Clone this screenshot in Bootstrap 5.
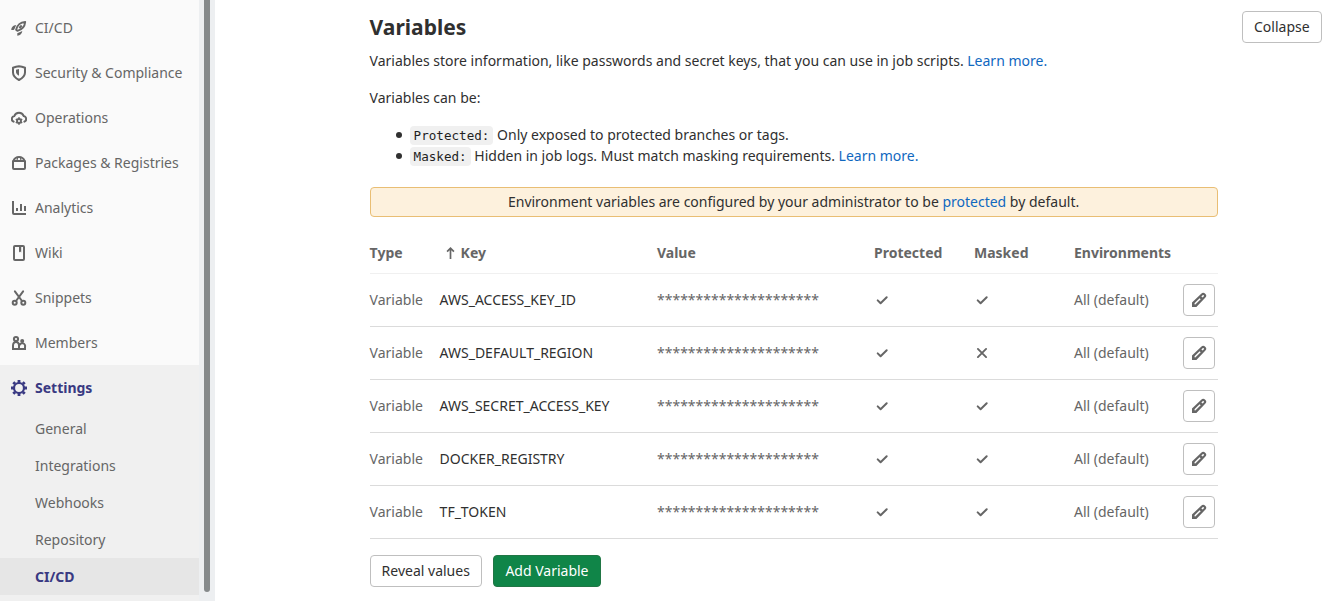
<!DOCTYPE html>
<html lang="en">
<head>
<meta charset="utf-8">
<meta name="viewport" content="width=device-width, initial-scale=1">
<title>CI/CD Settings</title>
<link rel="stylesheet" href="https://cdn.jsdelivr.net/npm/bootstrap@5.3.0/dist/css/bootstrap.min.css">
<style>
body{font:14px/20px "Noto Sans",sans-serif;color:#303030;height:601px;overflow:hidden}
a{color:#1068bf;text-decoration:none}
svg{display:block;flex:none}
.side{width:215px;background:#edeff1}
.side-menu{width:199px;background:#fafafa;padding-top:5px}
.side-link{height:45px;padding:1px 0 0 11px;gap:8px;color:#666}
.side-open{background:#f0f0f0}
.side-open .side-link,.sub-link.current{color:#393982;font-weight:700}
.sub-link{height:37px;padding:1px 0 0 35px;color:#666}
.sub-link.current{background:#e6e6e6}
.thumb{width:6px;height:592px;margin-left:5px;background:#868a8b;border-radius:0 0 3px 3px}
.main-pane{padding:11px 14.4px 0 154.6px}
.settings-body{width:848px}
h4{font-size:21px;line-height:28px;font-weight:700;margin:2px 0 10px}
.can-be{margin-top:17px}
.btn{--bs-btn-font-size:14px;--bs-btn-line-height:16px;--bs-btn-padding-x:11px;--bs-btn-padding-y:7px;--bs-btn-border-radius:4px}
.btn-plain{--bs-btn-color:#303030;--bs-btn-border-color:#bfbfbf;--bs-btn-bg:#fff}
.btn-confirm{--bs-btn-color:#fff;--bs-btn-bg:#108548;--bs-btn-border-color:#217645;--bs-btn-padding-x:11.5px}
.btn-edit{width:32px;height:32px;padding:7px;color:#666}
.actions{gap:11px}
code{font:12.6px/17px "DejaVu Sans Mono",monospace;color:#1f1f1f;background:#f0f0f0;border-radius:4px;padding:2px 4px}
.kinds{line-height:21px;padding-left:40px;margin:16px 0 0;list-style:none}
.kinds li::before{content:"";display:inline-block;width:6px;height:6px;border-radius:50%;background:#303030;margin:0 7.500px 0 -13.500px;vertical-align:2.5px}
.notice{height:30px;margin-top:21px;border:1px solid #e9be74;border-radius:4px;background:#fdf1dd}
.vars{table-layout:fixed;margin:16px 0 0;--bs-table-color:#666}
.vars>:not(caption)>*>*{padding:0;height:53px;border-bottom:1px solid #dbdbdb;vertical-align:middle;color:#666}
.vars>:not(caption)>*>:nth-child(n+3){padding-left:.4px}
.vars>thead>tr>th{height:40px;padding-top:1px;font-weight:700;border-bottom-color:#f0f0f0}
.vars>tbody>tr>td.key{color:#303030}
</style>
</head>
<body class="d-flex">
<svg width="0" height="0" class="position-absolute">
  <symbol id="check" viewBox="0 0 16 16"><path d="M3.700 8.400l2.900 2.800 6.100-6" fill="none" stroke="currentColor" stroke-width="2" stroke-linecap="round" stroke-linejoin="round"/></symbol>
  <symbol id="cross" viewBox="0 0 16 16"><path d="M3.900 3.900l8.200 8.200M12.100 3.900l-8.200 8.200" fill="none" stroke="currentColor" stroke-width="1.900" stroke-linecap="round"/></symbol>
  <symbol id="pencil" viewBox="0 0 16 16"><path fill="currentColor" fill-rule="evenodd" d="M1 15v-4.500L10.200 1.800a2.700 2.700 0 0 1 4 0 2.700 2.700 0 0 1 0 4L5.400 15zM3.700 12.500h.6L9.700 7.300 8.600 6.200 3.500 11.200zM10.400 4.600l1 1 1.300-1.200a.75.75 0 0 0-1.100-1.100z"/></symbol>
</svg>
<aside class="side d-flex flex-shrink-0">
  <nav class="side-menu">
    <a class="side-link d-flex align-items-center"><svg width="16" height="16" viewBox="0 0 16 16"><path d="M14.200 1.900C9.800 2.300 6.200 5.300 5.100 9.700l1.300 1.200C10.700 9.800 13.800 6.200 14.200 1.900zM8.300 8l2.400-2.500" fill="none" stroke="currentColor" stroke-width="1.900" stroke-linejoin="round"/><path d="M5.200 4.900L3.400 9.200 2.600 10H.3C.2 7.500 2 5 5.200 4.900zM11.300 10.900c-.2 2.600-2 4.600-5 4.900v-2.600z" fill="currentColor"/></svg>CI/CD</a>
    <a class="side-link d-flex align-items-center"><svg width="16" height="16" viewBox="0 0 16 16"><path d="M8 1.200c2.300.3 4.200.9 6 1.600V7.500c0 3.200-2.500 5.700-6 7.500-3.500-1.800-6-4.300-6-7.500V2.800C3.800 2.100 5.700 1.500 8 1.200z" fill="none" stroke="currentColor" stroke-width="2" stroke-linejoin="round"/><path d="M8 4v6.800C6.200 9.700 5 8.500 5 7V4.800z" fill="currentColor"/></svg>Security &amp; Compliance</a>
    <a class="side-link d-flex align-items-center"><svg width="16" height="16" viewBox="0 0 16 16"><path d="M2.600 11.700A3 3 0 0 1 3.300 6 5 5 0 0 1 12.700 6a3 3 0 0 1 .7 5.700" fill="none" stroke="currentColor" stroke-width="2" stroke-linecap="round"/><circle cx="8" cy="11" r="2" fill="none" stroke="currentColor" stroke-width="1.900"/><path d="M8 7.200v1.600M8 13.200v1.600M4.800 9.100l1.300.8M9.900 12.100l1.300.8M4.800 12.900l1.300-.8M9.900 9.900l1.300-.8" stroke="currentColor" stroke-width="1.600"/></svg>Operations</a>
    <a class="side-link d-flex align-items-center"><svg width="16" height="16" viewBox="0 0 16 16"><path d="M2 6h12v7a1 1 0 0 1-1 1H3a1 1 0 0 1-1-1zM2.400 5.800C3.400 3.300 5.200 1.900 8 1.900s4.600 1.400 5.600 3.900" fill="none" stroke="currentColor" stroke-width="2" stroke-linejoin="round"/><path d="M6.700 2L6 5.500M9.300 2l.7 3.500" stroke="currentColor" stroke-width="1.200"/></svg>Packages &amp; Registries</a>
    <a class="side-link d-flex align-items-center"><svg width="16" height="16" viewBox="0 0 16 16"><path d="M2 1v12a1 1 0 0 0 1 1h12M6 8v3M10 4v7M14 6v5" fill="none" stroke="currentColor" stroke-width="2"/></svg>Analytics</a>
    <a class="side-link d-flex align-items-center"><svg width="16" height="16" viewBox="0 0 16 16"><rect x="3" y="1" width="10" height="14" rx="1" fill="none" stroke="currentColor" stroke-width="2"/><path d="M8 1h2.200v6.500L9.100 6.600 8 7.500z" fill="currentColor"/></svg>Wiki</a>
    <a class="side-link d-flex align-items-center"><svg width="16" height="16" viewBox="0 0 16 16" fill="none" stroke="currentColor" stroke-width="2"><circle cx="3.700" cy="12.700" r="2"/><circle cx="12.300" cy="12.700" r="2"/><path d="M3.900 1.400L11 11M12.100 1.400L5 11" stroke-linecap="round"/></svg>Snippets</a>
    <a class="side-link d-flex align-items-center"><svg width="16" height="16" viewBox="0 0 16 16" fill="none" stroke="currentColor" stroke-width="2"><circle cx="5" cy="4" r="2.100"/><circle cx="11.200" cy="6" r="1"/><path d="M2 14v-3.200C2 8.500 3.300 7 5 7s3 1.500 3 3.800V14zM8 14h6v-2a2.500 2.500 0 0 0-5.400-1.800"/></svg>Members</a>
    <div class="side-open">
      <a class="side-link d-flex align-items-center"><svg width="16" height="16" viewBox="0 0 16 16"><circle cx="8" cy="8" r="5" fill="none" stroke="currentColor" stroke-width="2.200"/><path d="M8 0v3M8 13v3M0 8h3M13 8h3M2.300 2.300l1.800 1.800M11.900 11.900l1.800 1.800M2.300 13.700l1.800-1.800M11.900 4.100l1.800-1.800" stroke="currentColor" stroke-width="2.800"/></svg>Settings</a>
      <a class="sub-link d-flex align-items-center">General</a>
      <a class="sub-link d-flex align-items-center">Integrations</a>
      <a class="sub-link d-flex align-items-center">Webhooks</a>
      <a class="sub-link d-flex align-items-center">Repository</a>
      <a class="sub-link current d-flex align-items-center">CI/CD</a>
      <div class="pt-2"></div>
    </div>
  </nav>
  <div class="thumb"></div>
</aside>
<main class="main-pane flex-grow-1 d-flex justify-content-between align-items-start">
  <section class="settings-body">
    <h4>Variables</h4>
    <p class="mb-0">Variables store information, like passwords and secret keys, that you can use in job scripts. <a href="#">Learn more.</a></p>
    <p class="mb-0 can-be">Variables can be:</p>
    <ul class="kinds">
      <li><code>Protected:</code> Only exposed to protected branches or tags.</li>
      <li><code>Masked:</code> Hidden in job logs. Must match masking requirements. <a href="#">Learn more.</a></li>
    </ul>
    <div class="notice d-flex align-items-center justify-content-center"><span>Environment variables are configured by your administrator to be <a href="#">protected</a> by default.</span></div>
    <table class="table vars">
      <colgroup><col style="width:70px"><col style="width:217px"><col style="width:217px"><col style="width:100px"><col style="width:100px"><col style="width:109px"><col></colgroup>
      <thead><tr><th>Type</th><th><div class="d-flex align-items-center ps-1"><svg width="17" height="14" viewBox="0 0 17 14"><path d="M6.500 13V2M3.100 5.600L6.500 2.200l3.400 3.400" fill="none" stroke="currentColor" stroke-width="1.700"/></svg>Key</div></th><th>Value</th><th>Protected</th><th>Masked</th><th>Environments</th><th></th></tr></thead>
      <tbody id="rows"></tbody>
    </table>
    <div class="d-flex mt-3 actions"><button class="btn btn-plain">Reveal values</button><button class="btn btn-confirm">Add Variable</button></div>
  </section>
  <button class="btn btn-plain">Collapse</button>
</main>
<script>
const icon = n => `<svg width="16" height="16"><use href="#${n}"/></svg>`;
document.getElementById('rows').innerHTML = [
  ['AWS_ACCESS_KEY_ID', 'check'], ['AWS_DEFAULT_REGION', 'cross'], ['AWS_SECRET_ACCESS_KEY', 'check'],
  ['DOCKER_REGISTRY', 'check'], ['TF_TOKEN', 'check']
].map(([key, masked]) => `<tr><td>Variable</td><td class="key">${key}</td><td>${'*'.repeat(21)}</td><td>${icon('check')}</td><td>${icon(masked)}</td><td>All (default)</td><td><button class="btn btn-plain btn-edit" aria-label="Edit">${icon('pencil')}</button></td></tr>`).join('');
</script>
<script src="https://cdn.jsdelivr.net/npm/bootstrap@5.3.0/dist/js/bootstrap.bundle.min.js"></script>
</body>
</html>
